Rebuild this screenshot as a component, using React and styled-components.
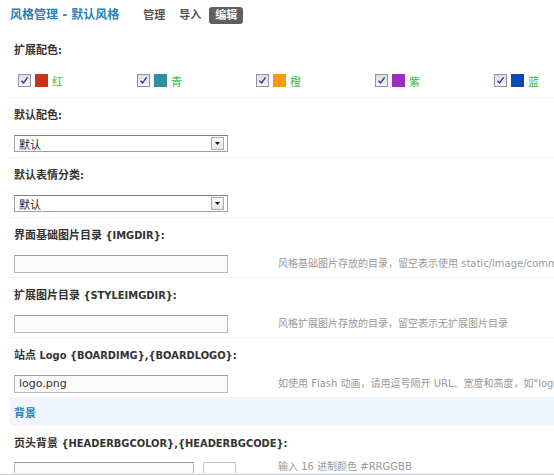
import React from "react";
import styled, {createGlobalStyle} from "styled-components";

const GlobalStyle = createGlobalStyle`
  html, body {
    margin: 0;
    padding: 0;
    background: #fff;
    overflow: hidden;
  }
  body {
    font-family: "DejaVu Sans", "Noto Sans CJK SC", sans-serif;
    font-size: 11px;
    color: #333;
  }
`;

const Page = styled.div`
  width: 640px;
  padding-left: 10px;
`;

const Header = styled.div`
  height: 33px;
  box-sizing: border-box;
  padding-top: 7px;
  display: flex;
  align-items: flex-start;
`;

const Title = styled.h1`
  margin: 0 18px 0 0;
  font-size: 12px;
  line-height: 17px;
  font-weight: bold;
  color: #2683b3;
`;

const NavLink = styled.a`
  display: block;
  padding: 0 6px;
  margin-right: 2px;
  height: 17px;
  line-height: 17px;
  font-size: 11px;
  font-weight: bold;
  border-radius: 3px;
  color: ${props => (props.active ? "#fff" : "#555")};
  background: ${props => (props.active ? "#5f5f5f" : "transparent")};
`;

const Label = styled.div`
  height: 31px;
  display: flex;
  align-items: center;
  padding-left: 4px;
  font-family: "DejaVu Sans Condensed", "Noto Sans CJK SC", sans-serif;
  font-size: 11px;
  font-weight: bold;
  color: #333;
`;

const ColorRow = styled.div`
  height: 34px;
  box-sizing: border-box;
  border-bottom: 1px solid #eef2f5;
  padding-left: 8px;
  display: grid;
  grid-template-columns: repeat(5, 119px);
  align-items: center;
`;

const ColorItem = styled.label`
  display: flex;
  align-items: center;
  gap: 4px;
  color: #3cbb3c;
  font-size: 11px;
`;

const CheckBox = styled.span`
  width: 11px;
  height: 11px;
  border: 1px solid #8e94a6;
  background: linear-gradient(#dcdde6, #f4f4f8);
  display: flex;
  align-items: center;
  justify-content: center;
`;

const Swatch = styled.span`
  width: 13px;
  height: 13px;
  background: ${props => props.color};
`;

const FieldRow = styled.div`
  height: ${props => (props.last ? 17 : 29)}px;
  box-sizing: border-box;
  overflow: hidden;
  border-bottom: 1px solid #eef2f5;
  display: grid;
  grid-template-columns: 268px 1fr;
  align-items: start;
`;

const FieldCell = styled.div`
  padding: ${props => (props.last ? 5 : 6)}px 0 0 4px;
  display: flex;
  gap: 9px;
`;

const Hint = styled.div`
  padding-top: ${props => (props.last ? 4 : 6)}px;
  line-height: ${props => (props.last ? 12 : 18)}px;
  font-size: 10px;
  color: #999;
  white-space: nowrap;
`;

const Select = styled.div`
  width: 214px;
  height: 17px;
  box-sizing: border-box;
  border: 1px solid #9aa0a8;
  border-top-color: #7c828a;
  background: #fff;
  display: flex;
  align-items: center;
  justify-content: space-between;
  padding: 0 3px 0 4px;
  font-size: 11px;
  color: #222;
`;

const SelectButton = styled.span`
  width: 11px;
  height: 11px;
  border: 1px solid #a9adb4;
  background: linear-gradient(#fafafa, #e4e4e4);
  display: flex;
  align-items: center;
  justify-content: center;
`;

const Input = styled.div`
  width: ${props => props.width || 214}px;
  height: 18px;
  box-sizing: border-box;
  border: 1px solid #b9b9b9;
  border-top-color: #9c9c9c;
  background: #fafafa;
  padding-left: 4px;
  line-height: 16px;
  font-size: 11px;
  color: #333;
`;

const ColorBox = styled.div`
  width: 33px;
  height: 22px;
  box-sizing: border-box;
  border: 1px solid #c6c6c6;
  background: #fff;
`;

const Section = styled.div`
  height: 28px;
  background: #f0f6fb;
  display: flex;
  align-items: center;
  padding-left: 4px;
  font-size: 11px;
  font-weight: bold;
  color: #2683b3;
`;

const StatusBar = styled.div`
  height: 20px;
  margin-left: -10px;
  border-top: 1px solid #c3ccd3;
  background: #edf1f4;
`;

const colors = [
    {name: "红", color: "#c8321c"},
    {name: "青", color: "#2f8f9c"},
    {name: "橙", color: "#f7980f"},
    {name: "紫", color: "#9a2fbd"},
    {name: "蓝", color: "#0a49b5"}
];

const Check = () => (
    <svg width="9" height="9" viewBox="0 0 9 9">
        <path d="M1.5 4.8 L3.6 7 L7.6 1.4" fill="none" stroke="#2a3b8f" strokeWidth="1.4"/>
    </svg>
);

const Arrow = () => (
    <svg width="5" height="3" viewBox="0 0 5 3">
        <path d="M0 0 H5 L2.5 3 Z" fill="#111"/>
    </svg>
);

const fields = [
    {label: "界面基础图片目录 {IMGDIR}:", value: "", hint: "风格基础图片存放的目录，留空表示使用 static/image/common"},
    {label: "扩展图片目录 {STYLEIMGDIR}:", value: "", hint: "风格扩展图片存放的目录，留空表示无扩展图片目录"},
    {label: "站点 Logo {BOARDIMG},{BOARDLOGO}:", value: "logo.png", hint: "如使用 Flash 动画，请用逗号隔开 URL、宽度和高度，如\"logo.swf,80,40\""}
];

export default function App() {
    return (
        <Page>
            <GlobalStyle/>
            <Header>
                <Title>风格管理 - 默认风格</Title>
                <NavLink>管理</NavLink>
                <NavLink>导入</NavLink>
                <NavLink active>编辑</NavLink>
            </Header>

            <Label>扩展配色:</Label>
            <ColorRow>
                {colors.map(c => (
                    <ColorItem key={c.name}>
                        <CheckBox><Check/></CheckBox>
                        <Swatch color={c.color}/>
                        {c.name}
                    </ColorItem>
                ))}
            </ColorRow>

            <Label>默认配色:</Label>
            <FieldRow>
                <FieldCell>
                    <Select>默认<SelectButton><Arrow/></SelectButton></Select>
                </FieldCell>
                <Hint/>
            </FieldRow>

            <Label>默认表情分类:</Label>
            <FieldRow>
                <FieldCell>
                    <Select>默认<SelectButton><Arrow/></SelectButton></Select>
                </FieldCell>
                <Hint/>
            </FieldRow>

            {fields.map(f => (
                <React.Fragment key={f.label}>
                    <Label>{f.label}</Label>
                    <FieldRow>
                        <FieldCell>
                            <Input>{f.value}</Input>
                        </FieldCell>
                        <Hint>{f.hint}</Hint>
                    </FieldRow>
                </React.Fragment>
            ))}

            <Section>背景</Section>

            <Label>页头背景 {"{HEADERBGCOLOR},{HEADERBGCODE}"}:</Label>
            <FieldRow last>
                <FieldCell last>
                    <Input width={180}/>
                    <ColorBox/>
                </FieldCell>
                <Hint last>输入 16 进制颜色 #RRGGBB</Hint>
            </FieldRow>
            <StatusBar/>
        </Page>
    );
}
